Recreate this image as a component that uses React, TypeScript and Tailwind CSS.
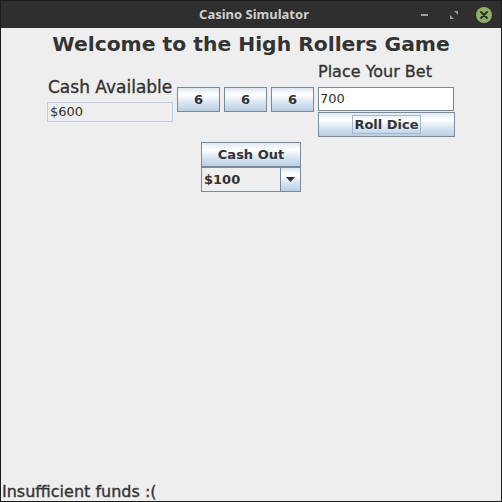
import React from "react";

const dlg = { fontFamily: '"DejaVu Sans", "Liberation Sans", sans-serif' };
const btnBg = {
  background:
    "linear-gradient(to bottom, #dde8f3 0%, #ffffff 30%, #dde8f3 60%, #b8cfe5 100%)",
};

function MetalButton({ label, className, focus }: { label: string; className: string; focus?: boolean }) {
  return (
    <div
      className={`flex items-center justify-center border border-[#7a8a99] text-[13px] font-bold text-[#333333] ${className}`}
      style={btnBg}
    >
      {focus ? (
        <span className="border border-[#a3b8cc] px-[1px] leading-[17px]">{label}</span>
      ) : (
        <span className="leading-[17px]">{label}</span>
      )}
    </div>
  );
}

export default function App() {
  return (
    <div
      className="w-[502px] h-[502px] border border-[#1c1c1c] bg-[#eeeeee] flex flex-col overflow-hidden"
      style={dlg}
    >
      <div className="h-[27px] bg-[#2f2f2f] relative flex items-center justify-center shrink-0">
        <span
          className="text-[13px] font-bold text-[#cfcfcf] leading-none ml-[6px]"
          style={{ fontFamily: '"Noto Sans", "DejaVu Sans", sans-serif' }}
        >
          Casino Simulator
        </span>
        <div className="absolute right-[9px] top-0 h-[27px] flex items-center gap-[14px]">
          <div className="w-[16px] h-[16px] flex items-center justify-center">
            <div className="w-[7px] h-[2px] bg-[#a0a0a0]" />
          </div>
          <div className="w-[16px] h-[16px] flex items-center justify-center">
            <svg width="10" height="10" viewBox="0 0 10 10">
              <path d="M5 1 L9 1 L9 5 Z" fill="#9a9a9a" />
              <path d="M1 5 L1 9 L5 9 Z" fill="#9a9a9a" />
            </svg>
          </div>
          <div className="w-[16px] h-[16px] rounded-full bg-[#8fae66] flex items-center justify-center">
            <svg width="8" height="8" viewBox="0 0 8 8">
              <path d="M1 1 L7 7 M7 1 L1 7" stroke="#2b2b2b" strokeWidth="1.8" strokeLinecap="round" />
            </svg>
          </div>
        </div>
      </div>

      <div className="flex-1 flex flex-col text-[#333333]">
        <div className="text-center text-[20.3px] font-bold leading-[24px] mt-[4px]">
          Welcome to the High Rollers Game
        </div>

        <div className="flex items-start ml-[46px] mt-[7px]">
          <div className="flex flex-col w-[126px] mt-[14px]">
            <div className="text-[17px] leading-[20px] pl-[1px] whitespace-nowrap [-webkit-text-stroke:0.35px_#333333]">
              Cash Available
            </div>
            <div className="mt-[5px] h-[20px] border border-[#b8cfe5] bg-[#eeeeee] flex items-center pl-[2px] text-[13px]">
              $600
            </div>
          </div>

          <div className="flex gap-[4px] ml-[4px] mt-[24px]">
            <MetalButton label="6" className="w-[43px] h-[25px]" />
            <MetalButton label="6" className="w-[43px] h-[25px]" />
            <MetalButton label="6" className="w-[43px] h-[25px]" />
          </div>

          <div className="flex flex-col ml-[4px] w-[136px]">
            <div className="text-[16px] leading-[18px] whitespace-nowrap [-webkit-text-stroke:0.35px_#333333]">
              Place Your Bet
            </div>
            <div className="mt-[6px] h-[24px] border border-[#7a8a99] bg-white flex items-center pl-[1px] text-[13px]">
              700
            </div>
            <MetalButton label="Roll Dice" focus className="mt-[1px] w-[137px] h-[25px]" />
          </div>
        </div>

        <div className="mx-auto w-[100px] mt-[5px] flex flex-col">
          <MetalButton label="Cash Out" className="w-[100px] h-[25px]" />
          <div className="w-[100px] h-[25px] border border-[#7a8a99] flex">
            <div className="flex-1 bg-[#eeeeee] border-r border-[#7a8a99] flex items-center pl-[2px] text-[13px] font-bold">
              $100
            </div>
            <div className="w-[19px] flex items-center justify-center" style={btnBg}>
              <svg width="9" height="5" viewBox="0 0 9 5">
                <path d="M0 0 L9 0 L4.5 5 Z" fill="#333333" />
              </svg>
            </div>
          </div>
        </div>

        <div className="mt-auto text-[16px] leading-[19px] pl-[1px] mb-[0px] [-webkit-text-stroke:0.35px_#333333]">
          Insufficient funds :(
        </div>
      </div>
    </div>
  );
}
